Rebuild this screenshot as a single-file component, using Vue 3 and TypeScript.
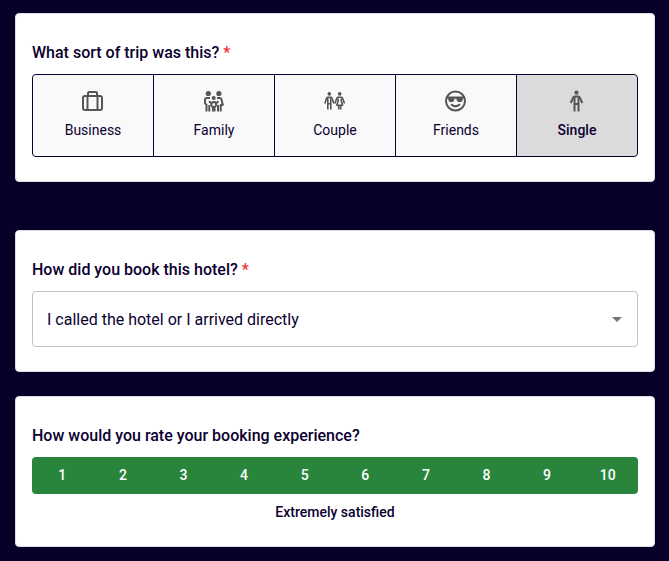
<script setup lang="ts">
import { ref } from 'vue'

type TripType = 'Business' | 'Family' | 'Couple' | 'Friends' | 'Single'

const tripTypes: TripType[] = ['Business', 'Family', 'Couple', 'Friends', 'Single']
const trip = ref<TripType>('Single')

const bookingMethods: string[] = [
  'I called the hotel or I arrived directly',
]
const booking = ref<string>(bookingMethods[0])

const rating = ref<number>(10)
</script>

<template>
  <main class="survey">
    <section class="card trip-card">
      <h2 id="trip-title" class="question">What sort of trip was this? <span class="required">*</span></h2>
      <div class="trip-options" role="group" aria-labelledby="trip-title">
        <button
          v-for="type in tripTypes"
          :key="type"
          type="button"
          class="trip-option"
          :class="{ selected: trip === type }"
          :aria-pressed="trip === type"
          @click="trip = type"
        >
          <svg v-if="type === 'Business'" class="icon" viewBox="0 0 24 24" aria-hidden="true">
            <g fill="none" stroke="currentColor" stroke-width="2">
              <rect x="2" y="7" width="19" height="14" rx="2" />
              <path d="M7 7V4Q7 3 8 3H15Q16 3 16 4V7" />
              <path d="M6.500 7V21M16.500 7V21" />
            </g>
          </svg>
          <svg v-else-if="type === 'Family'" class="icon" viewBox="0 0 24 24" aria-hidden="true">
            <g fill="currentColor">
              <circle cx="6.300" cy="4.500" r="2.600" />
              <circle cx="16.900" cy="4.500" r="2.600" />
              <circle cx="11.700" cy="9" r="2" />
            </g>
            <g fill="none" stroke="currentColor" stroke-width="2" stroke-linecap="butt" stroke-linejoin="round">
              <path d="M8 9H5Q3 9 3 11V14.500L4.500 15.500V22.500M7.300 16V22.500M7 12.300L9 14" />
              <path d="M15 9H17.500Q19.200 9 19.500 10.500L20.800 16H18.700V22.500M16 16V22.500M16.500 12.300L14.500 14" />
              <path d="M10.200 18L9.200 15.500Q9.200 13 11.700 13Q14.200 13 14.200 15.500L13.200 18M11 17V22.500M12.500 17V22.500" />
            </g>
          </svg>
          <svg v-else-if="type === 'Couple'" class="icon" viewBox="0 0 24 24" aria-hidden="true">
            <g fill="currentColor">
              <circle cx="6.300" cy="4.900" r="1.800" />
              <circle cx="16.700" cy="4.900" r="1.800" />
            </g>
            <g fill="none" stroke="currentColor" stroke-width="1.600" stroke-linejoin="round">
              <path d="M1.800 14.500L3.600 9.200Q3.900 8.300 4.900 8.300H7.700Q8.700 8.300 9 9.200L11 14.500" />
              <path d="M4.800 9V20.500M7.800 9V20.500M4.800 14.800H7.800" />
              <path d="M11.800 14.500L13.800 9.200Q14.200 8.300 15.200 8.300H18.200Q19.200 8.300 19.600 9.200L21.500 14.500" />
              <path d="M15.100 9.500V12L13.800 16.200H19.600L18.300 12V9.500M15.700 16.200V20.500M17.700 16.200V20.500" />
            </g>
          </svg>
          <svg v-else-if="type === 'Friends'" class="icon" viewBox="0 0 24 24" aria-hidden="true">
            <circle cx="11.500" cy="12" r="9.500" fill="none" stroke="currentColor" stroke-width="2" />
            <path
              d="M3 7.500H20V9.500H19L18.300 12Q17.800 13 16.700 13H14.800Q13.600 13 13.200 12L12.300 9.700H10.700L9.800 12Q9.400 13 8.200 13H6.300Q5.200 13 4.700 12L4 9.500H3Z"
              fill="currentColor"
            />
            <path d="M7 15.200Q11.500 19.500 16 15.200" fill="none" stroke="currentColor" stroke-width="2" />
          </svg>
          <svg v-else class="icon" viewBox="0 0 24 24" aria-hidden="true">
            <circle cx="11.500" cy="3.700" r="2.100" fill="currentColor" />
            <g fill="none" stroke="currentColor" stroke-width="2" stroke-linejoin="round">
              <path d="M5.700 14L8.100 8.700Q8.600 7.500 9.800 7.500H13.200Q14.400 7.500 14.900 8.700L17.300 14" />
              <path d="M9.500 8V22.500M13.500 8V22.500M9.500 15H13.500" />
            </g>
          </svg>
          <span class="trip-name">{{ type }}</span>
        </button>
      </div>
    </section>

    <section class="card">
      <label class="question" for="booking-method">How did you book this hotel? <span class="required">*</span></label>
      <div class="select-field">
        <select id="booking-method" v-model="booking">
          <option v-for="method in bookingMethods" :key="method">{{ method }}</option>
        </select>
        <svg class="arrow" viewBox="0 0 24 24" aria-hidden="true">
          <path d="M7 10L12 15L17 10Z" fill="currentColor" />
        </svg>
      </div>
    </section>

    <section class="card">
      <h2 id="rating-title" class="question">How would you rate your booking experience?</h2>
      <div class="rating" role="group" aria-labelledby="rating-title">
        <button
          v-for="n in 10"
          :key="n"
          type="button"
          class="score"
          :aria-pressed="rating === n"
          @click="rating = n"
        >{{ n }}</button>
      </div>
      <p class="rating-label">Extremely satisfied</p>
    </section>
  </main>
</template>

<style>
body {
  margin: 0;
  background: #080028;
}
</style>

<style scoped>
.survey {
  display: flex;
  flex-direction: column;
  gap: 24px;
  padding: 13px 14px 14px 15px;
  color: #0b0030;
  font-family: Roboto, "Liberation Sans", sans-serif;
}

.card {
  padding: 24px 16px;
  border: 1px solid #dcdce0;
  border-radius: 4px;
  background: #fff;
}

.trip-card {
  margin-bottom: 24px;
}

.question {
  display: block;
  margin: 0 0 6px;
  font-size: 16px;
  font-weight: 500;
  line-height: 30px;
}

.required {
  color: #f22c35;
}

.trip-options {
  display: grid;
  grid-template-columns: repeat(5, 1fr);
  gap: 1px;
  overflow: hidden;
  border: 1px solid #0b0030;
  border-radius: 4px;
  background: #0b0030;
}

button {
  margin: 0;
  border: 0;
  font: inherit;
  cursor: pointer;
}

.trip-option {
  display: flex;
  flex-direction: column;
  align-items: center;
  gap: 6px;
  padding: 14px 4px 15px;
  background: #f9f9f9;
  color: #0b0030;
  font-size: 14px;
  line-height: 22px;
}

.trip-option.selected {
  background: #dbdbdb;
  font-weight: 500;
}

.icon {
  width: 24px;
  height: 24px;
  color: #555;
}

.select-field {
  display: grid;
  align-items: center;
}

.select-field > * {
  grid-area: 1 / 1;
}

select {
  width: 100%;
  height: 56px;
  padding: 0 40px 0 14px;
  border: 1px solid #c1c1c1;
  border-radius: 4px;
  appearance: none;
  background: #fff;
  color: inherit;
  font: inherit;
  font-size: 16px;
}

.arrow {
  justify-self: end;
  width: 24px;
  height: 24px;
  margin-right: 9px;
  color: #757575;
  pointer-events: none;
}

.rating {
  display: grid;
  grid-template-columns: repeat(10, 1fr);
  overflow: hidden;
  border-radius: 4px;
  background: #28853b;
}

.score {
  padding: 8px 0;
  background: transparent;
  color: #fff;
  font-size: 14px;
  font-weight: 500;
  line-height: 21px;
}

.rating-label {
  margin: 8px 0 0;
  font-size: 14px;
  font-weight: 500;
  line-height: 20px;
  text-align: center;
}
</style>
